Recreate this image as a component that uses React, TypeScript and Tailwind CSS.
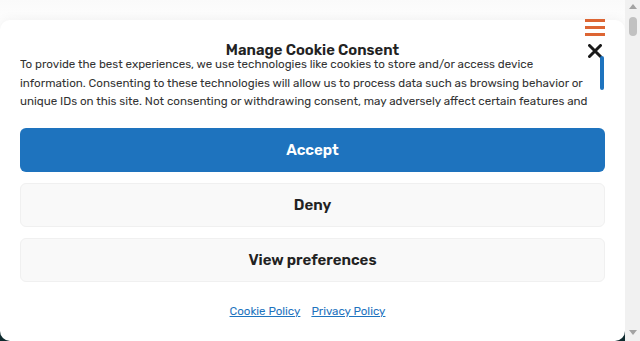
import React from "react";

const font = { fontFamily: "Rubik, Inter, 'Noto Sans', sans-serif" };

function Hamburger() {
    return (
        <div className="absolute right-[20px] top-[19px] flex w-[20px] flex-col gap-[4px]">
            <span className="h-[3px] w-full bg-[#dd6533]" />
            <span className="h-[3px] w-full bg-[#dd6533]" />
            <span className="h-[3px] w-full bg-[#dd6533]" />
        </div>
    );
}

function CloseIcon() {
    return (
        <svg
            className="absolute right-[23px] top-[44px]"
            width="14"
            height="14"
            viewBox="0 0 14 14"
        >
            <path d="M1.5 1.5 L12.5 12.5 M12.5 1.5 L1.5 12.5" stroke="#1a1a1a" strokeWidth="3" strokeLinecap="round" />
        </svg>
    );
}

export default function App() {
    return (
        <div className="flex h-[341px] w-[640px] overflow-hidden" style={font}>
            <div className="relative flex-1 bg-[linear-gradient(to_bottom,#fafafa_0%,#ffffff_10%,#ffffff_94%,#0f2b2f_94%)]">
                <div className="mt-[20px] h-[321px] rounded-[10px] bg-white px-[20px] pt-[23px] shadow-[0_0_12px_rgba(0,0,0,0.06)]">
                    <div className="text-center text-[14.8px] font-semibold leading-[15px] text-[#222]">
                        Manage Cookie Consent
                    </div>
                    <div className="relative -mt-[3px] h-[54px] overflow-hidden pr-[10px] text-[11.6px] leading-[18.5px] text-[#333]">
                        To provide the best experiences, we use technologies like cookies to store and/or access device
                        information. Consenting to these technologies will allow us to process data such as browsing behavior or
                        unique IDs on this site. Not consenting or withdrawing consent, may adversely affect certain features and
                        functions.
                    </div>
                    <div className="mt-[19px] flex flex-col gap-[11px]">
                        <button className="h-[44px] w-full rounded-[6px] bg-[#1e73be] text-[15px] font-semibold text-white">
                            Accept
                        </button>
                        <button className="h-[44px] w-full rounded-[6px] border border-[#f0f0f0] bg-[#f9f9f9] text-[15px] font-semibold text-[#222]">
                            Deny
                        </button>
                        <button className="h-[44px] w-full rounded-[6px] border border-[#f0f0f0] bg-[#f9f9f9] text-[15px] font-semibold text-[#222]">
                            View preferences
                        </button>
                    </div>
                    <div className="mt-[21px] flex justify-center gap-[11px] pr-[10px] text-[11.5px] text-[#1e73be]">
                        <a className="underline">Cookie Policy</a>
                        <a className="underline">Privacy Policy</a>
                    </div>
                </div>
                <Hamburger />
                <CloseIcon />
                <div className="absolute left-[600px] top-[56px] h-[34px] w-[4px] rounded-full bg-[#1e73be]" />
            </div>
            <div className="relative w-[15px] bg-[#f1f1f1]">
                <div className="absolute left-[4px] top-[4px] h-0 w-0 border-x-[4px] border-b-[5px] border-x-transparent border-b-[#a3a3a3]" />
                <div className="absolute left-[4px] top-[17px] h-[19px] w-[8px] rounded-full bg-[#c1c1c1]" />
                <div className="absolute bottom-[6px] left-[4px] h-0 w-0 border-x-[4px] border-t-[5px] border-x-transparent border-t-[#a3a3a3]" />
            </div>
        </div>
    );
}
